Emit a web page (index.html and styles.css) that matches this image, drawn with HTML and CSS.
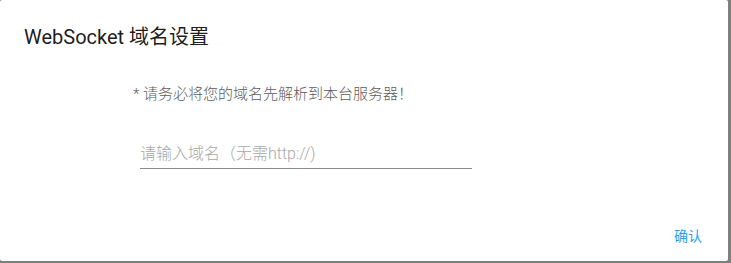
FILE: index.html
```html
<!DOCTYPE html>
<html lang="zh-CN">
<head>
<meta charset="utf-8">
<title>WebSocket 域名设置</title>
<link rel="stylesheet" href="styles.css">
</head>
<body>
<div class="dialog">
  <h2 class="dialog-title">WebSocket 域名设置</h2>
  <div class="dialog-content">
    <p class="notice">* 请务必将您的域名先解析到本台服务器！</p>
    <div class="field">
      <input class="field-input" type="text" placeholder="请输入域名（无需http://)">
    </div>
  </div>
  <div class="dialog-actions">
    <button class="btn" type="button">确认</button>
  </div>
</div>
</body>
</html>
```

FILE: styles.css
```css
html, body {
  margin: 0;
  padding: 0;
  height: 100%;
}
body {
  background: #7f7f7f;
  font-family: Roboto, "Noto Sans CJK SC", sans-serif;
  overflow: hidden;
}
.dialog {
  width: 728px;
  height: 261px;
  background: #fff;
  border-radius: 2px;
  display: flex;
  flex-direction: column;
  box-sizing: border-box;
}
.dialog-title {
  margin: 0;
  padding: 21px 24px 0;
  height: 58px;
  box-sizing: border-box;
  font-size: 20px;
  line-height: 32px;
  font-weight: 400;
  color: rgba(0, 0, 0, 0.9);
}
.dialog-content {
  display: flex;
  flex-direction: column;
  padding-left: 133px;
}
.notice {
  margin: 25px 0 0;
  font-size: 15px;
  line-height: 22px;
  font-weight: 300;
  color: #5c5c5c;
}
.field {
  margin: 34px 0 0 7px;
  width: 332px;
  border-bottom: 1px solid #8c8c8c;
}
.field-input {
  display: block;
  width: 100%;
  height: 29px;
  box-sizing: border-box;
  border: 0;
  outline: 0;
  padding: 0;
  background: transparent;
  font-family: Roboto, "Noto Sans CJK SC", sans-serif;
  font-size: 16px;
  font-weight: 300;
  line-height: 29px;
  color: #222;
}
.field-input::placeholder {
  color: #a8a8a8;
  opacity: 1;
}
.dialog-actions {
  margin-top: auto;
  display: flex;
  justify-content: flex-end;
  padding: 0 26px 15px 0;
}
.btn {
  border: 0;
  background: transparent;
  padding: 0;
  font-family: Roboto, "Noto Sans CJK SC", sans-serif;
  font-size: 14px;
  line-height: 20px;
  color: #21a3f1;
  cursor: pointer;
}
```
